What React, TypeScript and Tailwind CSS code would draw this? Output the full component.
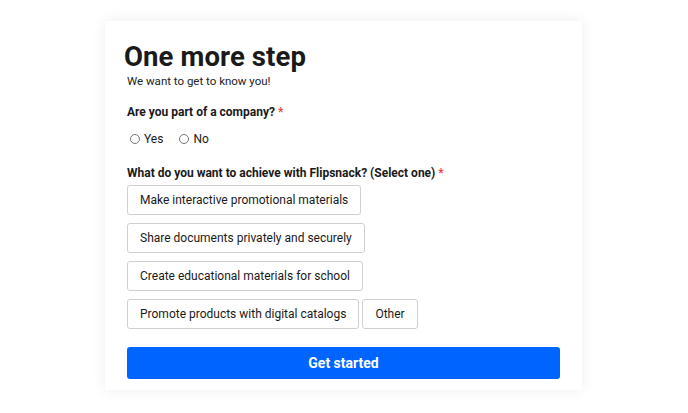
import React, { useState } from 'react';

const GOALS = [
  ['Make interactive promotional materials'],
  ['Share documents privately and securely'],
  ['Create educational materials for school'],
  ['Promote products with digital catalogs', 'Other'],
];

const App: React.FC = () => {
  const [company, setCompany] = useState<string | null>(null);
  const [goal, setGoal] = useState<string | null>(null);

  return (
    <div className="min-h-[413px] w-full bg-white pt-[21px] font-['Roboto',sans-serif] text-[#1a1a1a]">
      <div className="ml-[105px] w-[477px] bg-white px-[22px] pt-[20px] pb-[11px] shadow-[0_0_14px_rgba(0,0,0,0.07)]">
        <h1 className="-ml-[3px] text-[27.5px] font-bold leading-[32px] tracking-[0.1px]">One more step</h1>
        <p className="text-[11.5px] leading-[16px] text-[#222]">We want to get to know you!</p>

        <div className="mt-[14px] text-[12px] font-bold leading-[18px]">
          Are you part of a company? <span className="text-[#e5484d]">*</span>
        </div>
        <div className="mt-[9px] flex items-center gap-[16px] pl-[3px] text-[12px] leading-[18px]">
          {['Yes', 'No'].map((v) => (
            <label key={v} className="flex cursor-pointer items-center gap-[4px]">
              <input
                type="radio"
                name="company"
                checked={company === v}
                onChange={() => setCompany(v)}
                className="h-[10px] w-[10px] accent-[#0064ff]"
              />
              {v}
            </label>
          ))}
        </div>

        <div className="mt-[16px] text-[12px] font-bold leading-[18px]">
          What do you want to achieve with Flipsnack? (Select one) <span className="text-[#e5484d]">*</span>
        </div>
        <div className="mt-[3px] flex flex-col gap-[8px]">
          {GOALS.map((row, i) => (
            <div key={i} className="flex gap-[3px]">
              {row.map((g) => (
                <button
                  key={g}
                  type="button"
                  onClick={() => setGoal(g)}
                  className={`h-[30px] rounded-[3px] border px-[12px] text-[12px] leading-[18px] ${
                    goal === g ? 'border-[#0064ff] text-[#0064ff]' : 'border-[#cfcfcf] text-[#1a1a1a]'
                  }`}
                >
                  {g}
                </button>
              ))}
            </div>
          ))}
        </div>

        <button
          type="button"
          className="mt-[18px] h-[32px] w-full rounded-[3px] bg-[#0064ff] text-[14px] font-bold text-white"
        >
          Get started
        </button>
      </div>
    </div>
  );
};

export default App;
